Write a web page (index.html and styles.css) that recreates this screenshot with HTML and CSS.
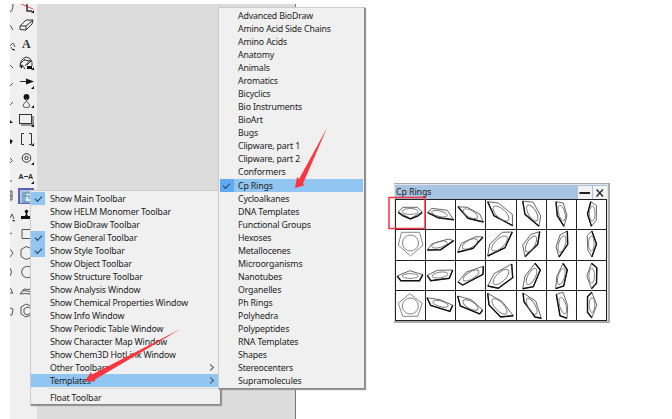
FILE: index.html
```html
<!DOCTYPE html>
<html lang="en">
<head>
<meta charset="utf-8">
<title>Cp Rings templates</title>
<link rel="stylesheet" href="styles.css">
</head>
<body>
<div class="desktop">
  <div class="canvas">
    <svg class="tools" width="27" height="415" viewBox="10 4 27 415">
      <g class="ink">
        <path class="soft" d="M10 12q3-1 3-8M10 25l3 5M10 46l3-3 2 4M11 47l2 3M10 65l3 3M10 86l3-3M10 105l3-3M10 143h2M10 158l2.500 2.500L10 163M10 181h2M10 191h2v9h-2zM10 196h2M10 218l2-4 2 5M10 234l2-1M10 249l3 4-3 4M10 268q3 4 0 8M10 288l3 5h-3M10 308l3 1-1 6h-2"/>
        <path class="fill" d="M10 120l3 3h-3zM10 139l3 2-3 3zM12 49h2.500v2zM12 220h2.500v2z"/>
        <path class="red" d="M21 4l12 5"/>
        <path class="thick" d="M27 4v7h5"/>
        <path d="M20 26l6-6 7 0-1 4-6 6-6-.500zM20 26l6 0 7-6M26 26v4"/>
        <path d="M20 67q0-8 6-10 7 1 6 9M20 64l5-5M24 60l7 1-4 4M22 65l3 4M25 66l5-6"/>
        <path class="fill" d="M27 66h5v3h-5zM20 64l3 2-2 3z"/>
        <path d="M20 81.500h8"/><path class="fill" d="M26 78.500l8 3-8 3z"/>
        <circle class="fill" cx="26.500" cy="97" r="2.900"/><path class="soft" d="M26.500 98v3q-7 6.500 0 6.500 6.500 0 0-6.500"/>
        <rect x="19.500" y="114.500" width="12" height="9"/><path class="shade" d="M21 125h12v-9"/>
        <path d="M24 133.500h-2.500v11H24M29 133.500h2.500v11H29"/>
        <circle cx="26.500" cy="158" r="4.300"/><circle cx="26.500" cy="158" r="1.700"/>
        <path d="M24 176.500h4"/>
        <path class="fill" d="M21 219h10v-3h-3l-1-2 1.500-3-2-1.500-2 1.500 1.500 3-1 2h-4z"/>
        <path class="soft" d="M31 229.500h-9v9h9M31 248.500l-5-2-5 3v7l5 3 5-2M31 267q-5-2-8 1-3 4 0 8 3 3 8 1M20 294l4-5q4 1 7 0M20 294q5-1 11 0M22 291q5-1 9 1M31 306l-5-2-5 3v7l5 3 5-2M31 308l-4-1-3 2v4l3 2 4-2"/>
        <path class="fill" d="M34 10v3h-3zM34 67v3h-3zM34 86v3h-3zM34 105v3h-3zM34 124v3h-3zM34 143v3h-3zM34 162v3h-3zM34 181v3h-3z"/>
      </g>
      <text class="big-a" x="22" y="48">A</text>
      <text class="small-a" x="18.500" y="179">A</text>
      <text class="small-a" x="28" y="179">A</text>
      <rect class="active-edge" x="18" y="188" width="16" height="16"/>
      <rect class="active" x="20" y="190" width="14" height="13"/>
      <path class="grid" d="M23 193h8v9h-8zM25 193v9M23 196h8M28 198h3"/>
    </svg>
  </div>

  <div class="menu main-menu">
    <div class="item on">Show Main Toolbar</div>
    <div class="item">Show HELM Monomer Toolbar</div>
    <div class="item">Show BioDraw Toolbar</div>
    <div class="item on">Show General Toolbar</div>
    <div class="item on">Show Style Toolbar</div>
    <div class="item">Show Object Toolbar</div>
    <div class="item">Show Structure Toolbar</div>
    <div class="item">Show Analysis Window</div>
    <div class="item">Show Chemical Properties Window</div>
    <div class="item">Show Info Window</div>
    <div class="item">Show Periodic Table Window</div>
    <div class="item">Show Character Map Window</div>
    <div class="item">Show Chem3D HotLink Window</div>
    <div class="item more">Other Toolbars</div>
    <div class="item more current">Templates</div>
    <div class="rule"></div>
    <div class="item">Float Toolbar</div>
  </div>

  <div class="menu sub-menu">
    <div class="item">Advanced BioDraw</div>
    <div class="item">Amino Acid Side Chains</div>
    <div class="item">Amino Acids</div>
    <div class="item">Anatomy</div>
    <div class="item">Animals</div>
    <div class="item">Aromatics</div>
    <div class="item">Bicyclics</div>
    <div class="item">Bio Instruments</div>
    <div class="item">BioArt</div>
    <div class="item">Bugs</div>
    <div class="item">Clipware, part 1</div>
    <div class="item">Clipware, part 2</div>
    <div class="item">Conformers</div>
    <div class="item on current">Cp Rings</div>
    <div class="item">Cycloalkanes</div>
    <div class="item">DNA Templates</div>
    <div class="item">Functional Groups</div>
    <div class="item">Hexoses</div>
    <div class="item">Metallocenes</div>
    <div class="item">Microorganisms</div>
    <div class="item">Nanotubes</div>
    <div class="item">Organelles</div>
    <div class="item">Ph Rings</div>
    <div class="item">Polyhedra</div>
    <div class="item">Polypeptides</div>
    <div class="item">RNA Templates</div>
    <div class="item">Shapes</div>
    <div class="item">Stereocenters</div>
    <div class="item">Supramolecules</div>
  </div>

  <div class="palette">
    <div class="title">
      <span>Cp Rings</span>
      <svg class="btn" width="14" height="13" viewBox="0 0 14 13"><path class="bar" d="M1.500 7h10.500"/></svg>
      <svg class="btn" width="14" height="13" viewBox="0 0 14 13"><path d="M3.500 3.500l6.500 7M10 3.500l-6.500 7"/></svg>
    </div>
    <div class="cells" id="cells"></div>
  </div>

  <svg class="marks" width="672" height="419" viewBox="0 0 672 419">
    <rect x="389" y="197.500" width="36" height="31"/>
    <path d="M327 128L303 183.500l1 2L295 188l2-11 2 2z"/>
    <path d="M181.500 328.500L95 379.500l0 2L85 381l6-9 1 2.500z"/>
  </svg>
</div>
<script src="rings.js"></script>
</body>
</html>
```
FILE: rings.js
```js
// Each ring: outline points, bold front edge, ellipse [cx, cy, rx, ry, angle].
const rings = [
  ["6.800,7.300 21.500,7.300 26.200,12 14.500,18.500 2.200,12", "2.200,12.500 7,16 14.500,19 22,16 26.200,12.500", [14.2,11.5,8,3,0]],
  ["1.700,12.700 5.700,8.300 21.300,10.300 27.700,19.700 12.300,17.700", "1.700,12.700 12.300,17.700 27.700,19.700", [13.5,13.7,8,2.8,14]],
  ["2,6.700 11,7.300 23.700,14 27.400,22 12,18.300", "2,6.700 12,18.300 27.400,22", [14.3,13.7,8,3.5,28]],
  ["1.700,1.700 12.300,3 26.300,14.300 26.700,25.700 8,15.700", "1.700,1.700 8,15.700 26.700,25.700", [15,13.5,10,4.5,42]],
  ["5.700,1 16.300,2.300 23.700,16 22,26.300 8,14.300", "5.700,1 8,14.300 22,26.300", [15.3,13,9,4,60]],
  ["9,1.700 16.300,3 20,15.700 17,26.300 10.300,15.700", "9,1.700 10.300,15.700 17,26.300", [14.7,13,8,3.2,74]],
  ["13.800,1.700 19.500,5.700 19.200,20.300 14.500,26.300 10.500,14", "13.800,1.700 10.500,14 14.500,26.300", [15.2,13.5,7.5,2.8,90]],

  ["5.500,2.300 23.500,2.300 27,15.200 14.500,26 2.300,15", "", [14.5,13,8,8,0]],
  ["1.300,20 5.700,14 22.300,9 27.700,10.700 14.700,19.700", "1.300,20 14.700,19.700 27.700,10.700", [13.5,14.5,8,3,-15]],
  ["1.700,22.300 5.300,13.300 19.700,6.700 27,7 17,18.300", "1.700,22.300 17,18.300 27,7", [13.8,14,8.500,3.8,-28]],
  ["1.700,26 3.700,14.300 16.300,2.300 26.300,2 19,17.700", "1.700,26 19,17.700 26.300,2", [13.5,13.5,10,4.5,-43]],
  ["22.700,1.700 14,4.300 5.700,15 8,26.700 20.700,14.300", "22.700,1.700 20.700,14.300 8,26.700", [14,14,9,4,-60]],
  ["20.300,1 13,5 9,16.700 12,27 20.700,14.300", "20.300,1 20.700,14.300 12,27", [15,14,8.500,3.4,-74]],
  ["14.800,1 10.200,5.700 10.800,20 14.800,27 19.500,14", "14.800,1 19.500,14 14.800,27", [14.3,13.5,7.5,2.8,90]],

  ["1.200,15 13.800,9.700 26.800,13.700 23.500,19.700 4.800,19.700", "1.200,15 4.800,19.700 23.500,19.700 26.800,13.700", [14.2,15,8,2.4,0]],
  ["1.300,14.300 11.300,9.300 26.700,9 23.300,17.300 4.700,19.700", "1.300,14.300 4.700,19.700 23.300,17.300 26.700,9", [14,14,8,2.8,-9]],
  ["2,21 10.300,11 27.400,5.300 27,13.300 6.700,24", "2,21 6.700,24 27,13.300 27.400,5.300", [15,14.5,9,3.5,-30]],
  ["1.700,25 8,12.700 25.700,3 26.700,16.700 12.300,27.300", "1.700,25 12.300,27.300 26.700,16.700 25.700,3", [15,16,10,4.5,-44]],
  ["8,15 18,2.300 23.300,9 16.300,25.700 5.700,27.700", "5.700,27.700 16.300,25.700 23.300,9 18,2.300", [14.5,15.500,9,3.8,-62]],
  ["9.700,15.700 16,2.300 20.300,9 16.700,25 8.700,27.700", "8.700,27.700 16.700,25 20.300,9 16,2.300", [14.3,15.500,8.5,3.2,-74]],
  ["9.800,15 14.500,2.300 19.800,6.700 19.500,22.300 14.500,27.700", "14.500,2.300 19.800,6.700 19.500,22.300 14.500,27.700", [14.7,14.7,7.5,2.8,90]],

  ["13.800,2.700 26.200,12.300 21.800,25.300 6.800,25.300 2.200,12.300", "", [14.3,15,8,8,0]],
  ["1,6.700 14,8.700 26.700,14.300 24,20.300 4.700,14.300", "1,6.700 4.700,14.300 24,20.300 26.700,14.300", [14.5,12.800,8,2.8,16]],
  ["1.700,5 15.300,8.700 26.700,19 23.700,23 4.300,15", "1.700,5 4.300,15 23.700,23 26.700,19", [14.5,14,8.5,3.6,30]],
  ["1.700,2.300 16.300,10.700 27.300,24.700 14.700,26 3,14", "1.700,2.300 3,14 14.700,26 27.300,24.700", [13.5,15.500,10,4.2,46]],
  ["6,2 18.700,10 24.300,27.300 18,26 7,10.700", "6,2 7,10.700 18,26 24.300,27.300", [14.7,15.200,9,3.6,60]],
  ["9.300,3.300 16,1.300 20.700,14.700 20,27.300 13,24.700", "9.300,3.300 13,24.700 20,27.300", [15.8,14.500,8.5,3.2,74]],
  ["14.800,1.300 19.800,14 14.800,26.700 10.500,21.300 10.500,5.700", "14.800,1.300 10.500,5.700 10.500,21.300 14.800,26.700", [15,14,7.5,2.8,90]]
];

document.getElementById("cells").innerHTML = rings.map(([outline, edge, e]) =>
  `<div class="cell"><svg class="ring${edge ? "" : " flat"}" width="30" height="30" viewBox="0 0 30 30">
    <polygon points="${outline}"/>
    <polyline class="edge" points="${edge}"/>
    <ellipse cx="${e[0]}" cy="${e[1]}" rx="${e[2]}" ry="${e[3]}" transform="rotate(${e[4]} ${e[0]} ${e[1]})"/>
  </svg></div>`).join("");
```
FILE: styles.css
```css
* { box-sizing: border-box; }
body {
  margin: 0;
  background: #fff;
  color: #1c1c1c;
  font: 8.800px/13px "Noto Sans", sans-serif;
  letter-spacing: -.17px;
}
.desktop { position: relative; width: 672px; height: 419px; overflow: hidden; }
.canvas {
  width: 286px;
  height: 415px;
  margin: 0 0 0 10px;
  transform: translateY(4px);
  background: #dcdcdc;
  border-right: 1px solid #777;
}
.tools { display: block; background: #f0f0f0; }
.tools .ink { fill: none; stroke: #333; stroke-width: 1; }
.tools .soft { stroke: #555; }
.tools .fill { fill: #111; stroke: none; }
.tools .red { stroke: #f44; }
.tools .thick { stroke-width: 1.500; }
.tools .shade { stroke: #777; stroke-width: 1.600; }
.big-a { font: bold 12px "Liberation Serif", serif; fill: #333; }
.small-a { font: bold 7px "Liberation Sans", sans-serif; fill: #222; }
.active-edge { fill: #6461b5; }
.active { fill: #a5c8e8; }
.grid { fill: #d8eef4; stroke: #4b7f9a; }

.menu {
  position: absolute;
  background: #f0f0f0;
  border: 1px solid #ccc;
  border-right-color: #888;
  border-bottom-color: #888;
  box-shadow: 1px 1px 1px #999;
}
.main-menu { left: 30px; top: 190px; width: 191px; height: 215px; padding: 1px 1px 0 0; }
.sub-menu { left: 218px; top: 7px; width: 147px; height: 382px; padding: 1.300px 1px 0; }
.item {
  position: relative;
  height: 13.020px;
  padding-left: 19px;
  line-height: 15px;
  white-space: nowrap;
}
.sub-menu .item { height: 13.030px; padding-left: 18px; }
.current { background: #91c5f2; }
.on::before {
  content: "";
  position: absolute;
  left: 0;
  top: 0;
  width: 14px;
  height: 13px;
  background: #91c5f2;
}
.current.on::before { background: #60aaf2; }
.on::after {
  content: "";
  position: absolute;
  left: 4px;
  top: 4px;
  width: 6px;
  height: 3px;
  border: solid #23405c;
  border-width: 0 0 1px 1px;
  transform: rotate(-45deg);
}
.sub-menu .on::after { left: 3px; }
.more::after {
  content: "";
  position: absolute;
  right: 6px;
  top: 4px;
  width: 4px;
  height: 4px;
  border: solid #555;
  border-width: 1px 1px 0 0;
  transform: rotate(45deg);
}
.rule { height: 1px; margin: 1px 2px 2px 17px; background: #d8d8d8; }

.palette {
  position: absolute;
  left: 394px;
  top: 183px;
  width: 216px;
  height: 140px;
  padding: 1px;
  background: #e4e4e4;
  border: solid #aaa;
  border-width: 1px 2px 2px 0;
}
.title {
  display: flex;
  align-items: center;
  gap: 1px;
  height: 14px;
  padding: 0 0 0 1px;
  background: #a9c3e3;
}
.title span { flex: 1; letter-spacing: -.08px; }
.btn { background: #f2f2f2; fill: none; stroke: #222; stroke-width: 1.300; }
.btn .bar { stroke-width: 2; }
.cells {
  display: grid;
  grid-template-columns: repeat(7, 1fr);
  grid-template-rows: repeat(4, 1fr);
  height: 122px;
  background: #fff;
  border: solid #222;
  border-width: 1px 0 0 1px;
}
.cell { border: solid #222; border-width: 0 1px 1px 0; overflow: hidden; }
.ring { display: block; fill: none; stroke: #555; stroke-width: .9; }
.ring .edge { stroke: #111; stroke-width: 1.400; }
.ring ellipse { stroke: #777; }
.flat { stroke: #777; }

.marks { position: absolute; left: 0; top: 0; fill: #fb3640; }
.marks rect { fill: none; stroke: #f7323f; stroke-width: 1.500; }
```
